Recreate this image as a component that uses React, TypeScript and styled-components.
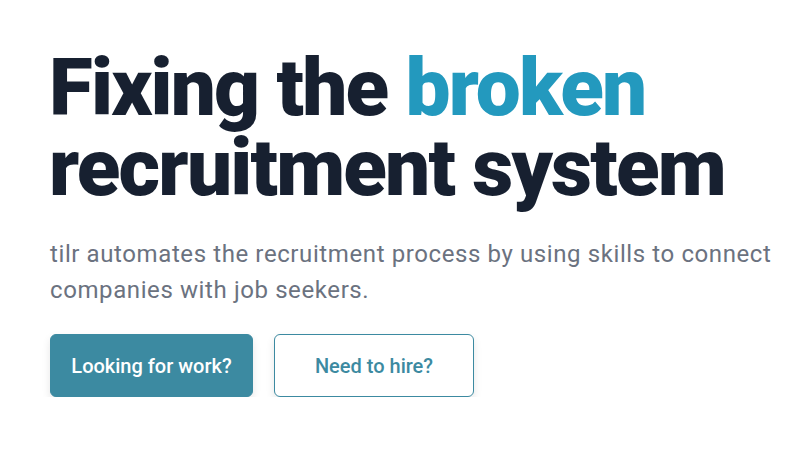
import React from "react";
import styled, { createGlobalStyle } from "styled-components";

const Global = createGlobalStyle`
  html, body { margin: 0; padding: 0; background: #ffffff; }
  body { font-family: Roboto, "Liberation Sans", sans-serif; }
`;

const Hero = styled.section`
  display: flex;
  flex-direction: column;
  align-items: flex-start;
  padding: 48px 0 0 49px;
`;

const Title = styled.h1`
  margin: 0;
  font-family: Roboto, "Liberation Sans", sans-serif;
  font-weight: 900;
  font-size: 80px;
  line-height: 80px;
  letter-spacing: -1.8px;
  color: #172030;
`;

const Accent = styled.span`
  color: #2399be;
`;

const Lead = styled.p`
  margin: 28px 0 0 1px;
  font-size: 24px;
  line-height: 36px;
  font-weight: 400;
  letter-spacing: 0.6px;
  color: #6b7280;
  max-width: 740px;
`;

const Actions = styled.div`
  display: flex;
  gap: 21px;
  margin-top: 26px;
  margin-left: 1px;
`;

const Button = styled.button<{ $primary?: boolean; $w: number }>`
  box-sizing: border-box;
  width: ${(p) => p.$w}px;
  height: 63px;
  padding: 0;
  border-radius: 6px;
  font-family: Roboto, "Liberation Sans", sans-serif;
  font-weight: 500;
  font-size: 20px;
  cursor: pointer;
  border: 1px solid #3c8aa1;
  background: ${(p) => (p.$primary ? "#3c8aa1" : "#ffffff")};
  color: ${(p) => (p.$primary ? "#ffffff" : "#3c8aa1")};
  box-shadow: 0 4px 8px rgba(0, 0, 0, 0.1);
`;

export default function App() {
  return (
    <>
      <Global />
      <Hero>
        <Title>
          Fixing the <Accent>broken</Accent>
          <br />
          recruitment system
        </Title>
        <Lead>
          tilr automates the recruitment process by using skills to connect
          companies with job seekers.
        </Lead>
        <Actions>
          <Button $primary $w={203}>Looking for work?</Button>
          <Button $w={200}>Need to hire?</Button>
        </Actions>
      </Hero>
    </>
  );
}
